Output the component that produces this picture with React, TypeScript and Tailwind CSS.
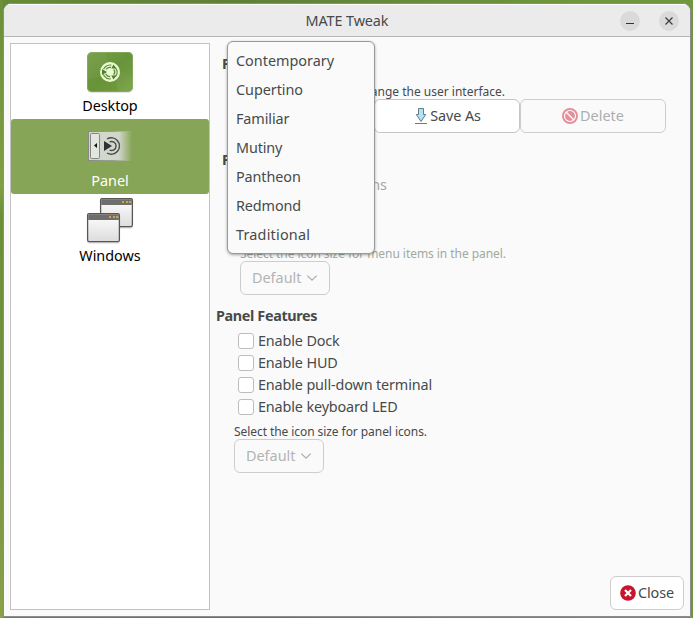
import React from "react";

const LAYOUTS = [
  { name: "Contemporary", cls: "tracking-normal" },
  { name: "Cupertino", cls: "tracking-[-0.05px]" },
  { name: "Familiar", cls: "tracking-[-0.1px]" },
  { name: "Mutiny", cls: "tracking-[-0.15px]" },
  { name: "Pantheon", cls: "tracking-[-0.1px]" },
  { name: "Redmond", cls: "tracking-[-0.1px]" },
  { name: "Traditional", cls: "tracking-[0.2px]" },
];

const FEATURES = ["Enable Dock", "Enable HUD", "Enable pull-down terminal", "Enable keyboard LED"];

function DesktopIcon() {
  return (
    <svg width="48" height="48" viewBox="0 0 48 48">
      <defs>
        <linearGradient id="desk" x1="0" y1="0" x2="1" y2="1">
          <stop offset="0" stopColor="#7da150" />
          <stop offset="0.5" stopColor="#6b943b" />
          <stop offset="1" stopColor="#80a54f" />
        </linearGradient>
      </defs>
      <rect x="1" y="5" width="46" height="40" rx="5" fill="#000" opacity=".12" />
      <rect x="1" y="4" width="46" height="40" rx="5" fill="url(#desk)" />
      <path d="M1 32 28 26 32 44H6Q1 44 1 39Z" fill="#64902f" opacity=".4" />
      <path d="M20 4 23 17 47 28V9Q47 4 42 4Z" fill="#65953a" opacity=".4" />
      <rect x="1.5" y="4.5" width="45" height="39" rx="4.5" fill="none" stroke="#94b66d" strokeOpacity=".55" />
      <circle cx="24" cy="24" r="10" fill="#e8fad0" />
      <g fill="none" stroke="#5f8a3c" strokeWidth="1.2">
        <circle cx="24" cy="24" r="7" strokeDasharray="9.2 5.46" transform="rotate(-37 24 24)" />
        <circle cx="24" cy="24" r="4.7" strokeDasharray="5.8 4.04" transform="rotate(-35 24 24)" />
      </g>
      <path d="M16 21v6l5-3ZM25.3 20.6 30.5 20.5 27.5 16.4ZM25.3 27.4 30.5 27.5 27.5 31.6Z" fill="#527c30" />
    </svg>
  );
}

function PanelIcon() {
  return (
    <svg width="48" height="48" viewBox="0 0 48 48">
      <defs>
        <linearGradient id="fade">
          <stop offset="0" stopColor="#d2d6cc" />
          <stop offset=".7" stopColor="#d2d6cc" />
          <stop offset="1" stopColor="#d2d6cc" stopOpacity="0" />
        </linearGradient>
        <linearGradient id="line">
          <stop offset="0" stopColor="#888a85" />
          <stop offset=".6" stopColor="#9da294" />
          <stop offset="1" stopColor="#9da294" stopOpacity="0" />
        </linearGradient>
      </defs>
      <path d="M2 8h44v30H2z" fill="url(#fade)" />
      <path d="M2 8h44v1H2zM2 37h44v1H2z" fill="url(#line)" />
      <path d="M2.5 8v30" stroke="#888a85" />
      <rect x="4.5" y="10.5" width="9" height="25" rx="1.2" fill="#e3e5df" stroke="#858783" />
      <path d="M11 20v5l-3-2.5Z" fill="#111" />
      <path d="M18 18v10l8-5Z" fill="#2e3436" />
      <path d="M21 16A8.2 8.2 0 1 1 21 30" fill="none" stroke="#484c4a" strokeWidth="1.4" />
      <path d="M23.5 19A4.5 4.5 0 1 1 23.5 27" fill="none" stroke="#484c4a" strokeWidth="1.4" />
    </svg>
  );
}

function MiniWindow({ x, y, w }: { x: number; y: number; w: number }) {
  return (
    <g transform={`translate(${x} ${y})`}>
      <rect x="0" y="1.5" width={w} height="29" rx="2" fill="#000" opacity=".15" />
      <rect x=".6" y=".6" width={w - 1.2} height="28" rx="1.5" fill="url(#glass)" stroke="#555753" strokeWidth="1.3" />
      <rect x="1.2" y="1.2" width={w - 2.4} height="5.8" fill="#6e6e6c" />
      <path d={`M${w - 11} 3h2v2h-2zM${w - 7} 3h2v2h-2zM${w - 4} 3h2v2h-2z`} fill="#d5a43d" />
    </g>
  );
}

function WindowsIcon() {
  return (
    <svg width="48" height="48" viewBox="0 0 48 48">
      <defs>
        <linearGradient id="glass" x2="0" y2="1">
          <stop offset="0" stopColor="#fff" />
          <stop offset="1" stopColor="#dcdcdc" />
        </linearGradient>
      </defs>
      <MiniWindow x={14} y={0} w={33} />
      <MiniWindow x={1} y={15} w={33} />
    </svg>
  );
}

function SizeSelect() {
  return (
    <div className="flex h-[34px] w-[90px] items-center rounded-[6px] border border-[#cdcdcd] pl-[11px] text-[#b2b4b4]">
      <span>Default</span>
      <svg className="ml-[5px]" width="12" height="12" viewBox="0 0 12 12">
        <path d="M1.3 3.6 6 8.2l4.7-4.6" fill="none" stroke="#adafaf" strokeWidth="1.3" />
      </svg>
    </div>
  );
}

export default function App() {
  return (
    <div className="h-[618px] w-[693px] overflow-hidden bg-[linear-gradient(90deg,transparent_3px,#668a35_3px,#5f8038_35%,#6f973e_85%),linear-gradient(180deg,#6c8f3a,#7f9f45_30%,#6c8f3a_35%,#6f9140_65%,#8aa04a)] pl-[3px] pt-[3px] font-['Noto_Sans','Open_Sans',sans-serif] text-[14.4px] leading-[20px] text-[#474a4a]">
      <div className="relative flex h-[614px] w-[688px] flex-col overflow-hidden rounded-t-[8px] border border-[#8c8c8c] bg-[#fafafa]">
        <header className="flex h-[33px] shrink-0 items-center border-b border-[#b6b6b6] border-t border-t-white bg-[#ebebeb] pr-[11px]">
          <div className="w-[70px]" />
          <h1 className="flex-1 text-center tracking-[-0.1px]">MATE Tweak</h1>
          <div className="flex gap-[19px]">
            <span className="flex size-[20px] items-center justify-center rounded-full bg-[#dadada]">
              <svg width="20" height="20" viewBox="0 0 20 20">
                <path d="M6 12.5h8" stroke="#333" strokeWidth="1" />
              </svg>
            </span>
            <span className="flex size-[20px] items-center justify-center rounded-full bg-[#dadada]">
              <svg width="20" height="20" viewBox="0 0 20 20">
                <path d="m6.5 6.5 7 7m0-7-7 7" stroke="#3f3f3f" strokeWidth="1.3" />
              </svg>
            </span>
          </div>
        </header>

        <div className="flex min-h-0 flex-1 p-[6px]">
          <aside className="flex h-[567px] w-[200px] shrink-0 flex-col border border-[#c3c3c3] bg-white text-black">
            <div className="flex h-[75px] flex-col items-center pt-[4px]">
              <DesktopIcon />
              <span className="tracking-[-0.1px]">Desktop</span>
            </div>
            <div className="flex h-[75px] flex-col items-center rounded-[3px] bg-[#87a556] pt-[4px] text-white">
              <PanelIcon />
              <span>Panel</span>
            </div>
            <div className="flex h-[75px] flex-col items-center pt-[4px]">
              <WindowsIcon />
              <span>Windows</span>
            </div>
          </aside>

          <main className="flex flex-1 flex-col pl-[6px]">
            <h2 className="mt-[11px] pl-[6px] font-bold">Panels</h2>
            <p className="mt-[10px] w-[289px] whitespace-nowrap text-right text-[12px] leading-[16px]">
              change the user interface.
            </p>
            <div className="-mt-px flex pl-[18px]">
              <div className="h-[34px] w-[140px] rounded-[6px] border border-[#cdcdcd] bg-white" />
              <div className="flex h-[34px] w-[146px] items-center justify-center rounded-[6px] border border-[#c6c6c6] bg-white">
                <svg className="mr-px" width="16" height="18" viewBox="0 0 16 18">
                  <path d="M5.5 1.5h5v6h2.2L8 14.5 3.3 7.5h2.2Z" fill="#aee3f8" stroke="#667b84" />
                  <path d="M2 16.5h12" stroke="#777" />
                </svg>
                <span className="tracking-[-0.1px]">Save As</span>
              </div>
              <div className="flex h-[34px] w-[146px] items-center justify-center rounded-[6px] border border-[#cdcdcd] text-[#acafaf]">
                <svg className="mr-[2px]" width="16" height="16" viewBox="0 0 16 16">
                  <circle cx="8" cy="8" r="8" fill="#e4909b" />
                  <circle cx="8" cy="8" r="5.5" fill="none" stroke="#fff" strokeWidth="1.1" />
                  <path d="m4 4 8 8" stroke="#fff" strokeWidth="1.2" />
                </svg>
                <span>Delete</span>
              </div>
            </div>
            <h2 className="mt-[17px] pl-[6px] font-bold">Panel Menu</h2>
            <div className="mt-[5px] flex w-[171px] justify-end whitespace-nowrap text-[#a4a6a6]">Show menu icons</div>
            <p className="mt-[51px] pl-[24px] text-[12px] leading-[16px] tracking-[-0.055px] text-[#a0aaa0]">
              Select the icon size for menu items in the panel.
            </p>
            <div className="-mt-px pl-[24px]">
              <SizeSelect />
            </div>
            <h2 className="mt-[11px] font-bold tracking-[-0.36px]">Panel Features</h2>
            <div className="mt-[4px] pl-[22px]">
              {FEATURES.map((f) => (
                <label key={f} className="flex h-[22px] items-center">
                  <span className="mr-[4px] size-[16px] rounded-[3px] border border-[#bdbdbd] bg-white" />
                  <span className="tracking-[-0.14px]">{f}</span>
                </label>
              ))}
            </div>
            <p className="mt-[6px] pl-[18px] text-[12px] leading-[16px] tracking-[-0.07px]">
              Select the icon size for panel icons.
            </p>
            <div className="-mt-px pl-[18px]">
              <SizeSelect />
            </div>
            <div className="mt-auto flex justify-end">
              <div className="flex h-[34px] w-[74px] items-center rounded-[6px] border border-[#cdcdcd] bg-white pl-[9px]">
                <svg className="mr-[2px]" width="16" height="16" viewBox="0 0 16 16">
                  <circle cx="8" cy="8" r="7.8" fill="#c7162b" />
                  <path d="m5 5 6 6m0-6-6 6" stroke="#fff" strokeWidth="2.2" />
                </svg>
                <span className="tracking-[-0.1px]">Close</span>
              </div>
            </div>
          </main>
        </div>

        <ul className="absolute left-[223px] top-[37px] h-[213px] w-[148px] rounded-[6px] border border-[#999] bg-[#fafafa] pl-[8px] pt-[4px] shadow-[0_1px_3px_rgba(0,0,0,0.35)]">
          {LAYOUTS.map((l) => (
            <li key={l.name} className="flex h-[29px] items-center">
              <span className={l.cls}>{l.name}</span>
            </li>
          ))}
        </ul>
      </div>
    </div>
  );
}
